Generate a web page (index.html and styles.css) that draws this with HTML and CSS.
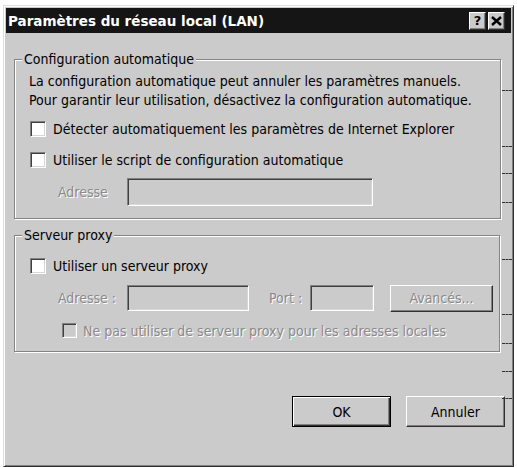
FILE: index.html
```html
<!DOCTYPE html>
<html lang="fr">
<head>
<meta charset="utf-8">
<title>Paramètres du réseau local (LAN)</title>
<link rel="stylesheet" href="styles.css">
</head>
<body>
<div class="dlg">
  <div class="titlebar">
    <span class="title">Paramètres du réseau local (LAN)</span>
    <span class="tbtn tq">?</span>
    <span class="tbtn tx"><svg width="11" height="10" viewBox="0 0 11 10"><path d="M1 1 L10 9 M10 1 L1 9" stroke="#000" stroke-width="2.4" fill="none"/></svg></span>
  </div>
  <div class="client">
    <div class="group g1">
      <span class="legend">Configuration automatique</span>
      <p class="desc">La configuration automatique peut annuler les paramètres manuels.<br>Pour garantir leur utilisation, désactivez la configuration automatique.</p>
      <div class="crow r1"><span class="cb"></span><span>Détecter automatiquement les paramètres de Internet Explorer</span></div>
      <div class="crow r2"><span class="cb"></span><span>Utiliser le script de configuration automatique</span></div>
      <div class="frow f1"><span class="lbl dis">Adresse</span><span class="field wide"></span></div>
    </div>
    <div class="group g2">
      <span class="legend">Serveur proxy</span>
      <div class="crow r3"><span class="cb"></span><span>Utiliser un serveur proxy</span></div>
      <div class="frow f2">
        <span class="lbl dis">Adresse :</span><span class="field addr"></span>
        <span class="dis port">Port :</span><span class="field portf"></span>
        <span class="btn adv dis">Avancés...</span>
      </div>
      <div class="crow r4 dis"><span class="cb off"></span><span>Ne pas utiliser de serveur proxy pour les adresses locales</span></div>
    </div>
    <div class="footer">
      <span class="btn main def">OK</span>
      <span class="btn main">Annuler</span>
    </div>
  </div>
  <span class="tick" style="top:84px"></span>
  <span class="tick" style="top:140px"></span>
  <span class="tick" style="top:167px"></span>
  <span class="tick" style="top:196px"></span>
  <span class="tick" style="top:253px"></span>
  <span class="tick" style="top:308px"></span>
  <span class="tick" style="top:337px"></span>
  <span class="tick" style="top:365px"></span>
  <span class="tick" style="top:392px"></span>
</div>
</body>
</html>
```
FILE: styles.css
```css
html, body {
  margin: 0;
  padding: 0;
  background: #ffffff;
}
body {
  font-family: "DejaVu Sans Condensed", "DejaVu Sans", Tahoma, sans-serif;
  font-stretch: condensed;
  font-size: 14px;
  color: #000;
}
.dlg {
  position: relative;
  box-sizing: border-box;
  margin: 5px 0 0 3px;
  width: 511px;
  height: 462px;
  background: #cbcbcb;
  border: 1px solid;
  border-color: #dcdcdc #303030 #303030 #dcdcdc;
  box-shadow: inset 1px 1px 0 #ffffff, inset -1px -1px 0 #808080;
  padding: 2px;
  display: flex;
  flex-direction: column;
}
.titlebar {
  height: 25px;
  background: #151515;
  display: flex;
  align-items: center;
  padding-left: 2px;
}
.title {
  flex: 1;
  color: #fff;
  font-family: "DejaVu Sans", Tahoma, sans-serif;
  font-stretch: normal;
  font-weight: bold;
  font-size: 13.5px;
}
.tbtn {
  box-sizing: border-box;
  width: 17px;
  height: 18px;
  background: #cbcbcb;
  border: 1px solid;
  border-color: #ffffff #303030 #303030 #ffffff;
  box-shadow: inset -1px -1px 0 #808080;
  display: flex;
  align-items: center;
  justify-content: center;
  font-family: "DejaVu Sans", sans-serif;
  font-stretch: normal;
  font-weight: bold;
  font-size: 13px;
  line-height: 1;
}
.tq { margin-right: 2px; }
.tx { margin-right: 6px; }
.client {
  flex: 1;
  display: flex;
  flex-direction: column;
  padding-left: 8px;
}
.group {
  box-sizing: border-box;
  width: 487px;
  border: 1px solid #848484;
  box-shadow: inset 1px 1px 0 #fff, 1px 1px 0 #fff;
  display: flex;
  flex-direction: column;
  align-items: flex-start;
  padding-left: 14px;
}
.g1 { margin-top: 26px; height: 160px; }
.g2 { margin-top: 16px; height: 117px; width: 486px; }
.legend {
  margin: -9px 0 0 -7px;
  padding: 0 2px;
  line-height: 17px;
  background: #cbcbcb;
}
.desc {
  margin: 4px 0 0 0;
  line-height: 19px;
}
.crow {
  display: flex;
  align-items: center;
  height: 19px;
  gap: 7px;
  margin-left: 1px;
}
.r1 { margin-top: 9px; }
.r2 { margin-top: 12px; }
.r3 { margin-top: 12px; }
.r4 { margin-top: 10px; margin-left: 33px; gap: 6px; }
.cb {
  box-sizing: border-box;
  width: 16px;
  height: 16px;
  background: #fff;
  border: 1px solid;
  border-color: #808080 #ffffff #ffffff #808080;
  box-shadow: inset 1px 1px 0 #404040, inset -1px -1px 0 #d6d6d6;
}
.cb.off { width: 15px; height: 15px; background: #cbcbcb; }
.frow {
  display: flex;
  align-items: center;
  margin-left: 29px;
}
.f1 { margin-top: 9px; height: 28px; }
.f2 { margin-top: 10px; height: 26px; }
.lbl { width: 69px; }
.dis {
  color: #8a8a8a;
  text-shadow: 1px 1px 0 #fff;
}
.field {
  box-sizing: border-box;
  height: 100%;
  background: #cbcbcb;
  border: 1px solid;
  border-color: #808080 #ffffff #ffffff #808080;
  box-shadow: inset 1px 1px 0 #404040, inset -1px -1px 0 #d6d6d6;
}
.wide { width: 246px; }
.addr { width: 122px; }
.port { margin-left: 20px; width: 41px; }
.portf { width: 64px; }
.btn {
  box-sizing: border-box;
  background: #cbcbcb;
  border: 1px solid;
  border-color: #ffffff #303030 #303030 #ffffff;
  box-shadow: inset -1px -1px 0 #808080;
  display: flex;
  align-items: center;
  justify-content: center;
}
.adv {
  margin-left: 16px;
  width: 103px;
  height: 27px;
}
.footer {
  display: flex;
  justify-content: flex-end;
  gap: 15px;
  margin-top: 44px;
  padding-right: 6px;
}
.main {
  width: 99px;
  height: 31px;
}
.def {
  border: 1px solid #000;
  box-shadow: inset 1px 1px 0 #fff, inset -1px -1px 0 #303030, inset -2px -2px 0 #808080;
}
.tick {
  position: absolute;
  left: 498px;
  width: 10px;
  height: 0;
  border-top: 1px dashed #333;
}
```
